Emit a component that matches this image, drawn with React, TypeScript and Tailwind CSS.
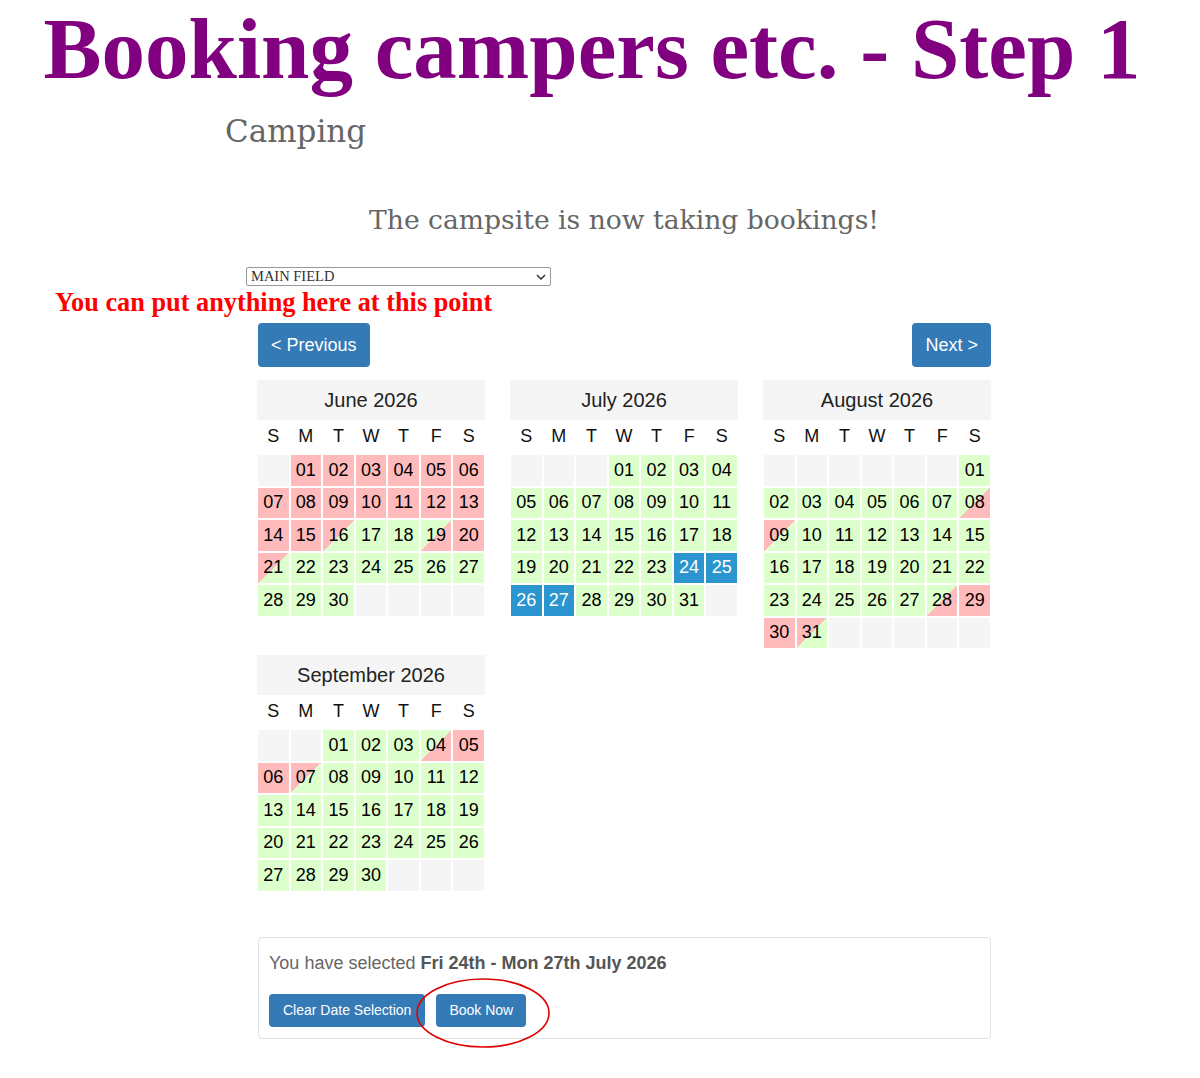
type DayState = 'r' | 'g' | 'b' | 'rg' | 'gr';

interface MonthData {
  name: string;
  offset: number; // weekday of the 1st, 0 = Sunday
  days: DayState[];
}

const cellClass: Record<DayState | 'empty', string> = {
  empty: 'bg-[#f5f5f5]',
  r: 'bg-[#ffbbbb] text-black',
  g: 'bg-[#ddffcc] text-black',
  b: 'bg-[#2b95d0] text-white',
  rg: 'bg-[linear-gradient(to_bottom_right,#ffbbbb_50%,#ddffcc_50%)] text-black',
  gr: 'bg-[linear-gradient(to_bottom_right,#ddffcc_50%,#ffbbbb_50%)] text-black',
};

function fill(count: number, state: DayState): DayState[] {
  return Array.from({ length: count }, () => state);
}

const months: MonthData[] = [
  {
    name: 'June 2026',
    offset: 1,
    days: [...fill(15, 'r'), 'rg', 'g', 'g', 'gr', 'r', 'rg', ...fill(9, 'g')],
  },
  {
    name: 'July 2026',
    offset: 3,
    days: [...fill(23, 'g'), 'b', 'b', 'b', 'b', ...fill(4, 'g')],
  },
  {
    name: 'August 2026',
    offset: 6,
    days: [...fill(7, 'g'), 'gr', 'rg', ...fill(18, 'g'), 'gr', 'r', 'r', 'rg'],
  },
  {
    name: 'September 2026',
    offset: 2,
    days: [...fill(3, 'g'), 'gr', 'r', 'r', 'rg', ...fill(23, 'g')],
  },
];

const weekdays = ['S', 'M', 'T', 'W', 'T', 'F', 'S'];

function Month({ month }: { month: MonthData }) {
  const total = Math.ceil((month.offset + month.days.length) / 7) * 7;
  const cells = Array.from({ length: total }, (_, i) => {
    const day = i - month.offset;
    return day >= 0 && day < month.days.length ? { day: day + 1, state: month.days[day] } : null;
  });

  return (
    <div className="w-[228px]">
      <div className="h-[40px] bg-[#f5f5f5] flex items-center justify-center text-[20px] text-[#222]">
        {month.name}
      </div>
      <div className="grid grid-cols-7 h-[32px] items-center text-[18px] text-[#111]">
        {weekdays.map((d, i) => (
          <div key={i} className="text-center">
            {d}
          </div>
        ))}
      </div>
      <div className="grid grid-cols-7 gap-[2px] pt-[3px] px-[1px]">
        {cells.map((c, i) =>
          c ? (
            <div
              key={i}
              className={`h-[30.5px] flex items-center justify-center text-[18px] ${cellClass[c.state]}`}
            >
              {String(c.day).padStart(2, '0')}
            </div>
          ) : (
            <div key={i} className={`h-[30.5px] ${cellClass.empty}`} />
          )
        )}
      </div>
    </div>
  );
}

export default function App() {
  return (
    <div className="w-[1200px] min-h-[1078px] bg-white font-['Liberation_Sans',Arial,sans-serif]">
      {/* Page heading */}
      <h1 className="w-[1184px] text-center text-[87px] leading-[97px] font-bold text-[#800080] font-['Liberation_Serif',serif]">
        Booking campers etc. - Step 1
      </h1>

      <h2 className="ml-[225px] mt-[14px] text-[31px] leading-[40px] text-[#666] font-['DejaVu_Serif',serif]">
        Camping
      </h2>

      <p className="ml-[257px] w-[734px] mt-[51px] text-center text-[26.6px] leading-[36px] text-[#666] font-['DejaVu_Serif',serif]">
        The campsite is now taking bookings!
      </p>

      {/* Field picker */}
      <div className="ml-[246px] mt-[29px] w-[305px] h-[19px] border border-[#999] rounded-[2px] flex items-center justify-between pl-[4px] pr-[4px] text-[14.5px] text-[#333] font-['Liberation_Serif',serif]">
        <span>MAIN FIELD</span>
        <svg width="10" height="6" viewBox="0 0 10 6" fill="none" stroke="#333" strokeWidth="1.5">
          <path d="M1 1l4 4 4-4" />
        </svg>
      </div>

      <p className="ml-[55px] mt-[2px] text-[26.3px] leading-[29px] font-bold text-[#ff0000] font-['Liberation_Serif',serif]">
        You can put anything here at this point
      </p>

      <div className="ml-[258px] w-[733px] mt-[6px] flex justify-between">
        <button className="h-[44px] px-[13px] rounded-[4px] bg-[#337ab7] text-white text-[18px]">
          &lt; Previous
        </button>
        <button className="h-[44px] px-[13px] rounded-[4px] bg-[#337ab7] text-white text-[18px]">
          Next &gt;
        </button>
      </div>

      {/* Availability calendars */}
      <div className="ml-[257px] mt-[13px] grid grid-cols-[228px_228px_228px] gap-x-[25px] gap-y-[7px] items-start">
        {months.map((m) => (
          <Month key={m.name} month={m} />
        ))}
      </div>

      {/* Selection summary */}
      <div className="relative ml-[258px] w-[733px] mt-[46px] border border-[#e3e3e3] rounded-[4px] pt-[13px] pb-[11px] pl-[10px]">
        <p className="text-[18px] leading-[24px] text-[#666]">
          You have selected <b className="text-[#555]">Fri 24th - Mon 27th July 2026</b>
        </p>
        <div className="mt-[19px] flex gap-[11px]">
          <button className="h-[33px] px-[14px] rounded-[4px] bg-[#337ab7] text-white text-[14px]">
            Clear Date Selection
          </button>
          <button className="h-[33px] px-[13px] rounded-[4px] bg-[#337ab7] text-white text-[14px]">
            Book Now
          </button>
        </div>
        <svg
          className="absolute left-[156px] top-[39px] pointer-events-none"
          width="136"
          height="72"
          viewBox="0 0 136 72"
          fill="none"
        >
          <ellipse cx="68" cy="36" rx="66" ry="34" stroke="#e00000" strokeWidth="1.6" />
        </svg>
      </div>
    </div>
  );
}
